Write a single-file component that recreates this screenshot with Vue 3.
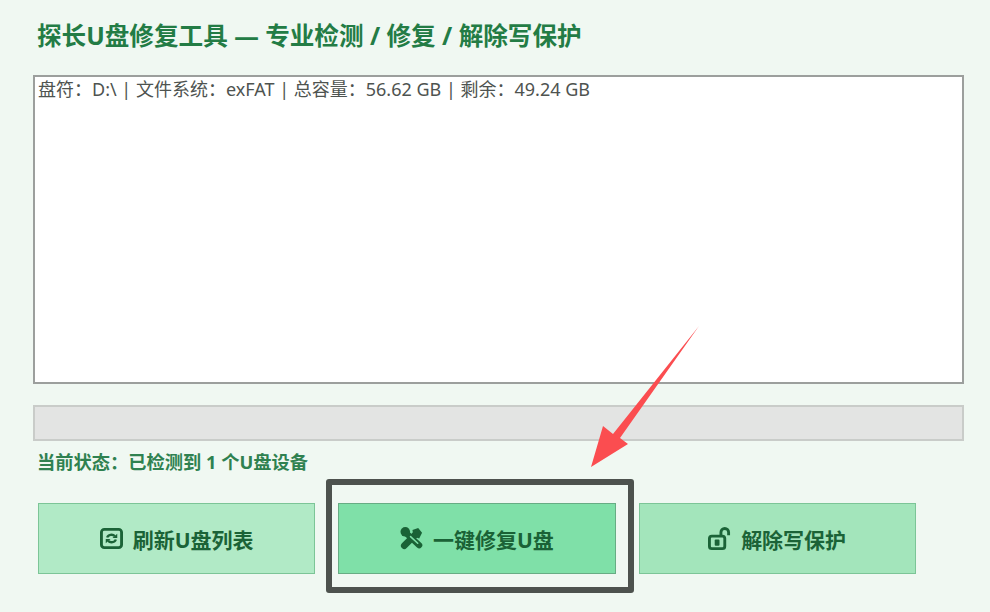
<script setup>
const buttons = [
  { label: '刷新U盘列表', tone: 'light', icon: 'refresh' },
  { label: '一键修复U盘', tone: 'strong', icon: 'tools' },
  { label: '解除写保护', tone: 'mid', icon: 'lock' },
]
</script>

<template>
  <main class="page">
    <h1 class="title">探长U盘修复工具 — 专业检测 / 修复 / 解除写保护</h1>
    <div class="list">盘符：D:\ | 文件系统：exFAT | 总容量：56.62 GB | 剩余：49.24 GB</div>
    <div class="progress"></div>
    <p class="status">当前状态：已检测到 1 个U盘设备</p>
    <div class="actions">
      <button v-for="b in buttons" :key="b.label" class="btn" :class="b.tone">
        <svg v-if="b.icon === 'refresh'" class="icon" viewBox="0 0 24 24" fill="none" stroke="currentColor">
          <rect x="1.500" y="2.500" width="21" height="19" rx="3" stroke-width="3" />
          <path d="M7.500 11a4.500 3.500 0 0 1 8-1.500M16.500 13a4.500 3.500 0 0 1-8 1.500" stroke-width="2.400" />
          <path d="M18 7v4.500h-5zM6 17v-4.500h5z" fill="currentColor" stroke="none" />
        </svg>
        <svg v-else-if="b.icon === 'tools'" class="icon" viewBox="0 0 24 24" fill="none" stroke="currentColor" stroke-linecap="round">
          <path d="M4.500 19.500L16 8" stroke-width="7" />
          <path d="M6 6l14 13" stroke-width="6.500" />
          <path d="M13 3l6-2 4 5-3 6-6-2z" fill="currentColor" stroke="none" />
          <circle cx="5.500" cy="5" r="5" fill="currentColor" stroke="none" />
          <path d="M11 10l7.500 7" stroke="#7fe0a8" stroke-width="1.600" />
        </svg>
        <svg v-else class="icon" viewBox="0 0 24 24" fill="none" stroke="currentColor">
          <rect x="1.500" y="9.500" width="16" height="13" rx="2.500" stroke-width="3" />
          <path d="M13.500 9.500V5.500a4 4 0 0 1 8 0v3" stroke-width="3" />
          <rect x="7" y="13" width="5" height="6.500" rx="1" fill="currentColor" stroke="none" />
        </svg>
        <span>{{ b.label }}</span>
      </button>
    </div>
    <div class="frame"></div>
    <svg class="arrow" viewBox="0 0 990 612">
      <polygon points="699,326 620,438 628,444 591,467 603,426 613,434" fill="#fb4d50" />
    </svg>
  </main>
</template>

<style scoped>
.page {
  position: relative;
  box-sizing: border-box;
  width: 990px;
  height: 612px;
  padding: 20px 26px 0 33px;
  overflow: hidden;
  background: #f0f8f2;
  font-family: "Noto Sans", "Noto Sans CJK SC", sans-serif;
}
.title {
  margin: 0 0 21px 4px;
  height: 34px;
  font-size: 24.6px;
  line-height: 32px;
  font-weight: 700;
  color: #237c45;
  white-space: nowrap;
}
.list {
  box-sizing: border-box;
  height: 309px;
  padding: 0 3px;
  background: #fff;
  border: 2px solid #9c9f9d;
  font-size: 18px;
  line-height: 24px;
  color: #4e5350;
  white-space: nowrap;
}
.progress {
  box-sizing: border-box;
  height: 36px;
  margin-top: 21px;
  background: #e3e4e3;
  border: 2px solid #c9ccc9;
}
.status {
  margin: 9px 0 0 4px;
  height: 42px;
  font-size: 18.25px;
  line-height: 24px;
  font-weight: 700;
  color: #2f8150;
  white-space: nowrap;
}
.actions {
  display: flex;
  gap: 23px;
  margin: 11px 0 0 5px;
}
.btn {
  box-sizing: border-box;
  display: flex;
  align-items: center;
  justify-content: center;
  gap: 10px;
  width: 277.25px;
  height: 71px;
  padding: 0;
  border: 1.5px solid #7cc597;
  font: inherit;
  font-size: 21px;
  font-weight: 700;
  color: #1b6337;
}
.light { background: #b1eac6; }
.strong { background: #7fe0a8; border-color: #67ad84; color: #1a6236; }
.mid { background: #a3e5bb; }
.icon {
  width: 23px;
  height: 23px;
  flex: none;
}
.frame {
  position: absolute;
  left: 326px;
  top: 479px;
  box-sizing: border-box;
  width: 308px;
  height: 114px;
  border: 6px solid #4d524e;
  border-radius: 3px;
}
.arrow {
  position: absolute;
  left: 0;
  top: 0;
  width: 990px;
  height: 612px;
  pointer-events: none;
}
</style>
